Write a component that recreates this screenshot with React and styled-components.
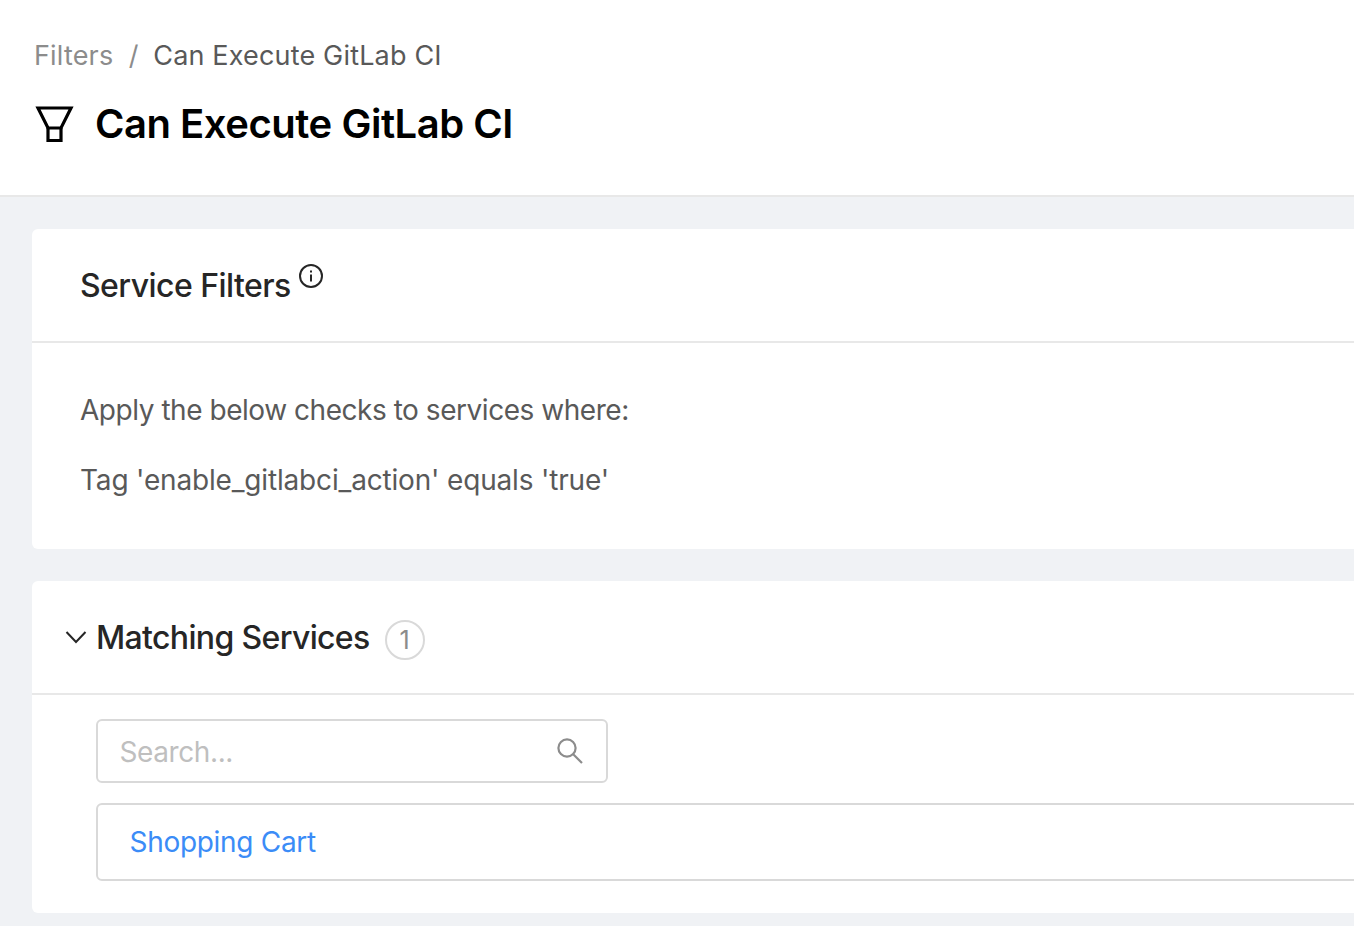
import React from 'react';
import styled, { createGlobalStyle } from 'styled-components';

const GlobalStyle = createGlobalStyle`
  html, body {
    margin: 0;
    height: 100%;
    overflow: hidden;
    background: #f0f2f5;
    font-family: Inter, 'Noto Sans', sans-serif;
  }
`;

const Page = styled.div`
  width: 1354px;
  height: 926px;
  overflow: hidden;
  background: #f0f2f5;
`;

const PageHeader = styled.header`
  height: 195px;
  box-sizing: content-box;
  background: #fff;
  border-bottom: 2px solid #e8e8e8;
  padding: 0 34px;
`;

const Breadcrumb = styled.nav`
  display: flex;
  align-items: center;
  height: 32px;
  padding-top: 40px;
  font-size: 27px;
  letter-spacing: 0.17px;
  line-height: 32px;
  color: #8c8c8c;
`;

const Separator = styled.span`
  margin: 0 14.5px 0 15.5px;
`;

const Current = styled.span`
  color: #595959;
`;

const TitleRow = styled.div`
  display: flex;
  align-items: center;
  gap: 20px;
  margin-top: 26px;
  margin-left: -1px;
  height: 52px;
`;

const Title = styled.h1`
  margin: 0;
  font-size: 40px;
  font-weight: 600;
  letter-spacing: -0.47px;
  line-height: 54px;
  color: #000;
`;

const Content = styled.main`
  display: flex;
  flex-direction: column;
  gap: 32px;
  padding: 32px 0 0 32px;
`;

const Card = styled.section`
  width: 1400px;
  background: #fff;
  border-radius: 6px;
`;

const CardHeader = styled.div`
  display: flex;
  align-items: center;
  height: 112px;
  padding-left: ${({ $indent }) => $indent}px;
  border-bottom: 2px solid #e8e8e8;
`;

const CardTitle = styled.h2`
  margin: 2px 0 0;
  font-size: 32px;
  font-weight: 500;
  letter-spacing: ${({ $tracking }) => $tracking}px;
  line-height: 40px;
  color: #262626;
`;

const InfoMark = styled.svg`
  width: 26px;
  height: 26px;
  margin: -18px 0 0 7px;
`;

const FilterBody = styled.div`
  padding: 49px 48px 51px;
  font-size: 28px;
  line-height: 36px;
  color: #595959;
`;

const FilterLine = styled.p`
  margin: 0 0 34px;
  letter-spacing: ${({ $tracking }) => $tracking}px;
  &:last-child {
    margin-bottom: 0;
  }
`;

const Chevron = styled.svg`
  width: 22px;
  height: 14px;
  margin-right: 9px;
`;

const CountBadge = styled.span`
  display: flex;
  align-items: center;
  justify-content: center;
  box-sizing: border-box;
  width: 40px;
  height: 40px;
  margin: 6px 0 0 15px;
  border: 2px solid #d9d9d9;
  border-radius: 50%;
  font-size: 25px;
  color: #8c8c8c;
`;

const ServicesBody = styled.div`
  display: flex;
  flex-direction: column;
  gap: 20px;
  padding: 24px 0 32px 64px;
`;

const SearchBox = styled.div`
  display: flex;
  align-items: center;
  justify-content: space-between;
  box-sizing: border-box;
  width: 512px;
  height: 64px;
  padding: 2px 23px 0 21.5px;
  border: 2px solid #d9d9d9;
  border-radius: 6px;
  font-size: 28px;
  letter-spacing: -0.4px;
  color: #bfbfbf;
`;

const SearchIcon = styled.svg`
  width: 26px;
  height: 26px;
  margin-top: -2px;
`;

const ServiceRow = styled.div`
  box-sizing: border-box;
  height: 78px;
  padding: 0 32px 0 31.5px;
  display: flex;
  align-items: center;
  border: 2px solid #d9d9d9;
  border-radius: 6px;
`;

const ServiceLink = styled.a`
  font-size: 28px;
  letter-spacing: -0.3px;
  color: #3b8cf7;
  text-decoration: none;
`;

const App = () => (
  <Page>
    <GlobalStyle />
    <PageHeader>
      <Breadcrumb>
        <span>Filters</span>
        <Separator>/</Separator>
        <Current>Can Execute GitLab CI</Current>
      </Breadcrumb>
      <TitleRow>
        <svg width="42" height="42" viewBox="0 0 42 42" fill="none" stroke="#000" strokeWidth="3.2">
          <path d="M5 5h33L28 25H15Z" />
          <path d="M15 25v12.5h13V25" />
        </svg>
        <Title>Can Execute GitLab CI</Title>
      </TitleRow>
    </PageHeader>
    <Content>
      <Card>
        <CardHeader $indent={48}>
          <CardTitle $tracking={-0.55}>Service Filters</CardTitle>
          <InfoMark viewBox="0 0 26 26" fill="none" stroke="#262626" strokeWidth="2">
            <circle cx="13" cy="13" r="11" />
            <path d="M13 11.5v7" />
            <path d="M13 7.5v2" />
          </InfoMark>
        </CardHeader>
        <FilterBody>
          <FilterLine $tracking={-0.46}>Apply the below checks to services where:</FilterLine>
          <FilterLine $tracking={-0.17}>Tag 'enable_gitlabci_action' equals 'true'</FilterLine>
        </FilterBody>
      </Card>
      <Card>
        <CardHeader $indent={33}>
          <Chevron viewBox="0 0 22 14" fill="none" stroke="#262626" strokeWidth="2">
            <path d="M1.5 2 11 12 20.5 2" />
          </Chevron>
          <CardTitle $tracking={-0.65}>Matching Services</CardTitle>
          <CountBadge>1</CountBadge>
        </CardHeader>
        <ServicesBody>
          <SearchBox>
            <span>Search...</span>
            <SearchIcon viewBox="0 0 26 26" fill="none" stroke="#8c8c8c" strokeWidth="2.2">
              <circle cx="10" cy="10" r="8.6" />
              <path d="M16.2 16.2 25 25" />
            </SearchIcon>
          </SearchBox>
          <ServiceRow>
            <ServiceLink href="#">Shopping Cart</ServiceLink>
          </ServiceRow>
        </ServicesBody>
      </Card>
    </Content>
  </Page>
);

export default App;
